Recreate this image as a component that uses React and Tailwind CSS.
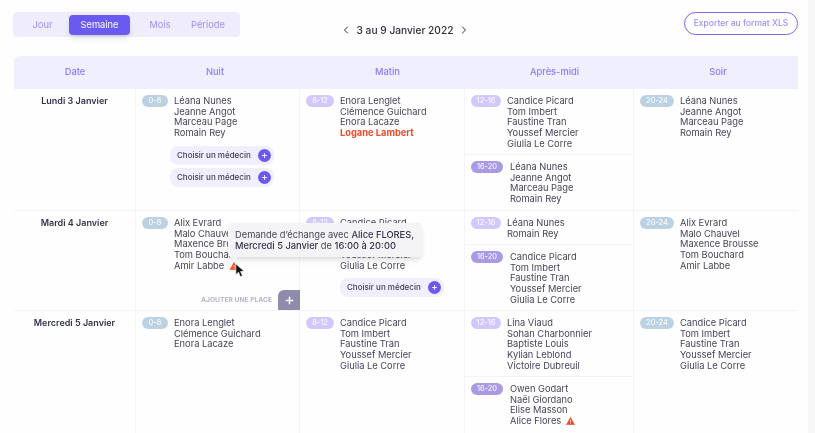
import { ChevronLeft, ChevronRight, Plus } from 'lucide-react'

const blue = 'bg-[#bcd2e3]'
const lilac = 'bg-[#d3c8fb]'
const purple = 'bg-[#a99ae3]'

function Warning({ className }) {
  return (
    <svg viewBox="0 0 24 22" className={className}>
      <path d="M12 1 L23.5 21 H0.5 Z" fill="#f04a27" stroke="#f04a27" strokeLinejoin="round" />
      <rect x="11" y="8" width="2" height="7" fill="#fff" />
      <rect x="11" y="16.5" width="2" height="2" fill="#fff" />
    </svg>
  )
}

function Tag({ label, color, width }) {
  return (
    <span className={`${color} ${width} h-3 rounded-full shrink-0 flex items-center justify-center text-[7.5px] leading-none text-white`}>
      {label}
    </span>
  )
}

function Names({ names }) {
  return (
    <div className="text-[9.3px] leading-[10.7px] text-[#45455a] whitespace-nowrap">
      {names.map((n) => (
        <div key={n}>{n}</div>
      ))}
    </div>
  )
}

function ChooseDoctor() {
  return (
    <div className="w-[104px] h-[19px] rounded-lg bg-[#f1effd] pl-[7px] pr-[3px] flex items-center justify-between text-[8px] font-medium text-[#3c3c4c] whitespace-nowrap">
      Choisir un médecin
      <span className="w-[13px] h-[13px] rounded-full bg-[#6a5af0] flex items-center justify-center text-white">
        <Plus size={7} strokeWidth={3} />
      </span>
    </div>
  )
}

function Shift({ label, color, width, gap, names, children }) {
  return (
    <div className={`flex ${gap} items-start pt-[6px] pl-[6px]`}>
      <Tag label={label} color={color} width={width} />
      <div className="pt-px">
        {names}
        {children}
      </div>
    </div>
  )
}

function Cell({ children, className = '' }) {
  return <div className={`border-r border-[#f4f4f8] ${className}`}>{children}</div>
}

function Afternoon({ first, second, firstH }) {
  return (
    <Cell className="flex flex-col">
      <div className={`${firstH} border-b border-[#f4f4f8]`}>
        <Shift label="12-16" color={lilac} width="w-[30px]" gap="gap-[6px]" names={<Names names={first} />} />
      </div>
      <Shift label="16-20" color={purple} width="w-[32px]" gap="gap-[7px]" names={second} />
    </Cell>
  )
}

const day = (label) => (
  <Cell className="pt-[6px] text-center text-[9px] leading-[11px] font-semibold text-[#33334a]">{label}</Cell>
)

const night = (names, children) => (
  <Shift label="0-8" color={blue} width="w-[26px]" gap="gap-[6px]" names={<Names names={names} />}>{children}</Shift>
)
const morning = (names, children) => (
  <Shift label="8-12" color={lilac} width="w-[28px]" gap="gap-[6px]" names={names}>{children}</Shift>
)
const evening = (names) => (
  <Shift label="20-24" color={blue} width="w-[34px]" gap="gap-[6px]" names={<Names names={names} />} />
)

const leana = ['Léana Nunes', 'Jeanne Angot', 'Marceau Page', 'Romain Rey']
const candice = ['Candice Picard', 'Tom Imbert', 'Faustine Tran', 'Youssef Mercier', 'Giulia Le Corre']
const alix = ['Alix Evrard', 'Malo Chauvel', 'Maxence Brousse', 'Tom Bouchard']
const enora = ['Enora Lenglet', 'Clémence Guichard', 'Enora Lacaze']

const headers = [
  ['Date', ''],
  ['Nuit', 'pr-[6px]'],
  ['Matin', 'pl-[10px]'],
  ['Après-midi', 'pl-[10px]'],
  ['Soir', 'pl-[4px]'],
]

export default function App() {
  return (
    <div className="relative h-[433px] w-[815px] overflow-hidden bg-[#f7f7f9] font-['Inter',sans-serif] blur-[0.4px]">
      <div className="w-[808px] h-full bg-[#fefefe] pl-[14px] pr-[10px]">
        <div className="flex items-start justify-between pt-3 h-[56px]">
          <div className="w-[227px] h-[25px] -ml-px bg-[#efedfc] rounded-sm flex items-center text-[9.3px] text-[#9d90f8]">
            <span className="w-[56px] pt-px pl-[3px] text-center">Jour</span>
            <span className="w-[61px] h-5 pt-px bg-[#6a5af0] rounded-sm shadow-md text-white flex items-center justify-center">Semaine</span>
            <span className="w-[60px] pt-px text-center">Mois</span>
            <span className="w-[36px] pt-px text-center">Période</span>
          </div>
          <div className="flex items-center gap-[5px] pt-[10px] mr-[114px] text-[#2e2e3e]">
            <ChevronLeft size={12} strokeWidth={2} />
            <span className="text-[10.2px] leading-4 font-medium">3 au 9 Janvier 2022</span>
            <ChevronRight size={12} strokeWidth={2} />
          </div>
          <div className="w-[114px] h-[23px] border-[1.5px] border-[#7b68ee] rounded-full flex items-center justify-center text-[8.5px] font-medium text-[#9d90f8]">
            Exporter au format XLS
          </div>
        </div>

        <div className="grid grid-cols-[122px_164px_165px_169px_164px] grid-rows-[33px_121px_100px_123px] w-[784px]">
          {headers.map(([h, pad]) => (
            <div key={h} className={`bg-[#f0effd] pb-[2px] flex items-center justify-center text-[9.3px] font-medium text-[#8b7bfb] first:rounded-tl-md last:rounded-tr-md ${pad}`}>
              {h}
            </div>
          ))}

          {day('Lundi 3 Janvier')}
          <Cell>
            {night(leana, (
              <div className="-ml-[4px] mt-[7px] flex flex-col gap-[3px]">
                <ChooseDoctor />
                <ChooseDoctor />
              </div>
            ))}
          </Cell>
          <Cell>
            {morning(
              <div className="text-[9.3px] leading-[10.7px] text-[#45455a] whitespace-nowrap">
                {enora.map((n) => (
                  <div key={n}>{n}</div>
                ))}
                <div className="font-bold text-[#f04a27]">Logane Lambert</div>
              </div>
            )}
          </Cell>
          <Afternoon first={candice} firstH="h-[66px]" second={<Names names={leana} />} />
          <Cell className="border-r-0">{evening(leana)}</Cell>

          <div className="col-span-5 row-start-3 col-start-1 grid grid-cols-subgrid border-t border-[#f4f4f8]">
            {day('Mardi 4 Janvier')}
            <Cell className="flex flex-col justify-between">
              {night([...alix, 'Amir Labbe'])}
              <div className="flex items-end justify-end gap-[6px] -mr-px text-[6.7px] leading-[20px] font-bold text-[#b5b3cb] whitespace-nowrap">
                AJOUTER UNE PLACE
                <span className="w-[22px] h-5 bg-[#8f8cab] rounded-tl-md flex items-center justify-center text-white">
                  <Plus size={11} strokeWidth={3} />
                </span>
              </div>
            </Cell>
            <Cell>
              {morning(<Names names={candice} />, (
                <div className="mt-[6px]">
                  <ChooseDoctor />
                </div>
              ))}
            </Cell>
            <Afternoon first={['Léana Nunes', 'Romain Rey']} firstH="h-[34px]" second={<Names names={candice} />} />
            <Cell className="border-r-0">{evening([...alix, 'Amir Labbe'])}</Cell>
          </div>

          <div className="col-span-5 row-start-4 col-start-1 grid grid-cols-subgrid border-t border-[#f4f4f8]">
            {day('Mercredi 5 Janvier')}
            <Cell>{night(enora)}</Cell>
            <Cell>{morning(<Names names={candice} />)}</Cell>
            <Afternoon
              first={['Lina Viaud', 'Sohan Charbonnier', 'Baptiste Louis', 'Kylian Leblond', 'Victoire Dubreuil']}
              firstH="h-[66px]"
              second={
                <div className="text-[9.3px] leading-[10.7px] text-[#45455a] whitespace-nowrap">
                  <div>Owen Godart</div>
                  <div>Naël Giordano</div>
                  <div>Elise Masson</div>
                  <div className="flex items-center gap-[5px]">
                    Alice Flores
                    <Warning className="w-[9px] h-[8px]" />
                  </div>
                </div>
              }
            />
            <Cell className="border-r-0">{evening(candice)}</Cell>
          </div>
        </div>
      </div>

      {/* tooltip + warning + pointer over the Mardi row */}
      <Warning className="absolute left-[229px] top-[262px] w-[10px] h-[8px]" />
      <div className="absolute left-[228px] top-[223px] w-[194px] h-[34px] bg-[#f4f4f6] rounded-sm shadow-md pl-[7px] pt-[6px] text-[9.3px] leading-[11px] text-[#45455a] whitespace-nowrap">
        Demande d’échange avec <span className="font-medium text-[#33334a]">Alice FLORES,</span>
        <br />
        <span className="font-medium text-[#33334a]">Mercredi 5 Janvier</span> de <span className="font-medium text-[#33334a]">16:00 à 20:00</span>
        <span className="absolute left-[3px] -bottom-[3px] w-[6px] h-[6px] rotate-45 bg-[#f4f4f6]" />
      </div>
      <svg viewBox="0 0 12 18" className="absolute left-[235px] top-[263px] w-[10px] h-[15px]">
        <path d="M1 1 L1 14 L4.2 11 L6.5 16.5 L9 15.4 L6.7 10.2 L11 10 Z" fill="#111" stroke="#fff" strokeWidth="0.8" />
      </svg>
    </div>
  )
}
